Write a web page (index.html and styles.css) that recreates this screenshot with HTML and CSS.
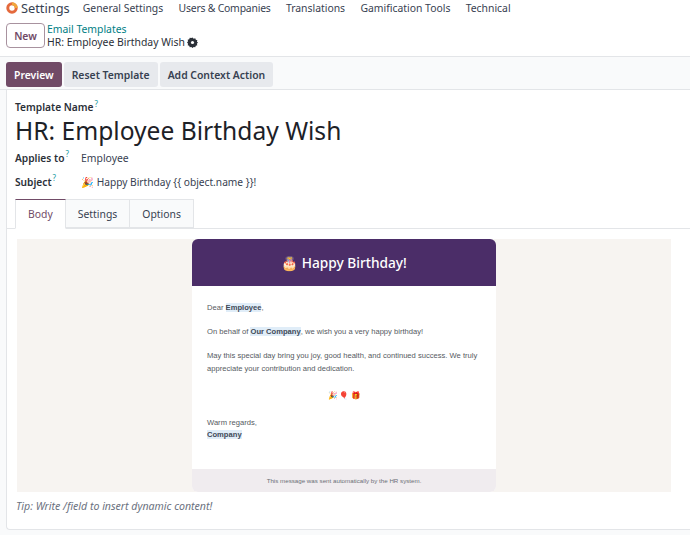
FILE: index.html
```html
<!DOCTYPE html>
<html lang="en">
<head>
    <meta charset="UTF-8">
    <title>Settings - Email Templates</title>
    <link rel="stylesheet" href="styles.css">
</head>
<body>
    <nav class="navbar">
        <svg class="app-logo" width="12" height="12" viewBox="0 0 12 12">
            <circle cx="6" cy="6" r="4.2" fill="none" stroke="#e4693c" stroke-width="3"/>
            <path d="M6 1.8a4.2 4.2 0 0 1 4.2 4.2" fill="none" stroke="#f0a63c" stroke-width="3"/>
        </svg>
        <span class="app-name">Settings</span>
        <a class="nav-item">General Settings</a>
        <a class="nav-item nav-tight">Users &amp; Companies</a>
        <a class="nav-item">Translations</a>
        <a class="nav-item">Gamification Tools</a>
        <a class="nav-item">Technical</a>
    </nav>

    <div class="control-panel">
        <button class="new-button">New</button>
        <div class="breadcrumb">
            <a class="crumb-link">Email Templates</a>
            <div class="crumb-current">
                HR: Employee Birthday Wish
                <svg class="gear" width="11" height="11" viewBox="0 0 12 12">
                    <path d="M6 .6l1.3 1.2 1.7-.5.6 1.7 1.7.6-.5 1.7L12 6l-1.2 1.3.5 1.7-1.7.6-.6 1.7-1.7-.5L6 12l-1.3-1.2-1.7.5-.6-1.7-1.7-.6.5-1.7L0 6l1.2-1.3-.5-1.7 1.7-.6.6-1.7 1.7.5z" fill="#2b3038"/>
                    <circle cx="6" cy="6" r="1.7" fill="#fff"/>
                </svg>
            </div>
        </div>
    </div>

    <div class="action-bar">
        <button class="btn btn-primary">Preview</button>
        <button class="btn">Reset Template</button>
        <button class="btn">Add Context Action</button>
    </div>

    <div class="sheet">
        <label class="field-label">Template Name<sup>?</sup></label>
        <h1 class="title">HR: Employee Birthday Wish</h1>

        <div class="field-row">
            <label class="field-label row-label">Applies to<sup>?</sup></label>
            <span>Employee</span>
        </div>
        <div class="field-row subject-row">
            <label class="field-label row-label">Subject<sup>?</sup></label>
            <span class="subject-value">🎉 Happy Birthday {{ object.name }}!</span>
        </div>

        <div class="tabs">
            <div class="tab active">Body</div>
            <div class="tab">Settings</div>
            <div class="tab">Options</div>
        </div>

        <div class="editor">
            <div class="mail-card">
                <div class="mail-header">🎂 Happy Birthday!</div>
                <div class="mail-body">
                    <p>Dear <b class="dyn">Employee</b>,</p>
                    <p>On behalf of <b class="dyn">Our Company</b>, we wish you a very happy birthday!</p>
                    <p>May this special day bring you joy, good health, and continued success. We truly appreciate your contribution and dedication.</p>
                    <div class="mail-emojis">🎉 🎈 🎁</div>
                    <p class="regards">Warm regards,<br><b class="dyn">Company</b></p>
                </div>
                <div class="mail-footer">This message was sent automatically by the HR system.</div>
            </div>
        </div>

        <div class="tip">Tip: Write /field to insert dynamic content!</div>
    </div>
</body>
</html>
```

FILE: styles.css
```css
:root {
    --primary-color: #714b67;
    --text-color: #374151;
    --border-color: #e3e5e8;
    --link-color: #017e84;
}

html {
    height: 100%;
    overflow: hidden;
}

body {
    margin: 0;
    height: 535px;
    overflow: hidden;
    background: #f9fafb;
    color: var(--text-color);
    font-family: 'Noto Sans', 'Open Sans', sans-serif;
    font-size: 10.4px;
}

button {
    font-family: inherit;
    cursor: pointer;
}

.navbar {
    display: flex;
    align-items: center;
    height: 15px;
    padding-left: 6px;
    background: white;
}

.app-logo {
    margin-right: 3px;
}

.app-name {
    font-size: 12.8px;
    margin-right: 13px;
}

.nav-item {
    margin-right: 15.3px;
}

.nav-tight {
    letter-spacing: -0.2px;
}

.control-panel {
    display: flex;
    align-items: flex-start;
    height: 42px;
    box-sizing: border-box;
    padding: 8px 0 0 6px;
    gap: 2px;
    background: white;
    border-bottom: 1px solid var(--border-color);
}

.new-button {
    width: 39px;
    height: 25px;
    padding: 0;
    border: 1px solid #a8929f;
    border-radius: 4px;
    background: white;
    color: var(--primary-color);
    font-size: 10.4px;
    font-weight: 600;
}

.breadcrumb {
    line-height: 13px;
}

.crumb-link {
    color: var(--link-color);
}

.crumb-current {
    display: flex;
    align-items: center;
    gap: 2px;
    color: #2b3038;
}

.action-bar {
    display: flex;
    gap: 2px;
    height: 33px;
    box-sizing: border-box;
    padding: 5px 0 0 6px;
    border-bottom: 1px solid var(--border-color);
}

.btn {
    height: 25px;
    padding: 0 8px;
    border: none;
    border-radius: 3px;
    background: #e7e9ed;
    color: var(--text-color);
    font-size: 10.4px;
    font-weight: 600;
}

.btn-primary {
    background: var(--primary-color);
    color: white;
}

.sheet {
    height: 440px;
    box-sizing: border-box;
    margin-left: 6px;
    padding-top: 10px;
    background: white;
    border-left: 1px solid var(--border-color);
    border-bottom: 1px solid var(--border-color);
    border-radius: 0 0 0 4px;
}

.field-label {
    display: block;
    margin-left: 8px;
    font-size: 10.2px;
    font-weight: 600;
    color: #2b3038;
    line-height: 15px;
}

.field-label sup {
    margin-left: 1px;
    font-size: 8px;
    font-weight: 400;
    color: #1b9aa0;
    line-height: 0;
}

.title {
    margin: 0 0 0 8px;
    font-size: 24.6px;
    font-weight: 400;
    line-height: 32px;
    color: #1d2127;
}

.field-row {
    display: flex;
    align-items: center;
    height: 16px;
    margin-top: 3px;
}

.subject-row {
    margin-top: 8px;
}

.row-label {
    width: 66px;
}

.subject-value {
    font-size: 10.2px;
}

.tabs {
    display: flex;
    height: 30px;
    box-sizing: border-box;
    margin-top: 9px;
    padding-left: 8px;
    border-bottom: 1px solid var(--border-color);
}

.tab {
    padding: 0 12px;
    line-height: 28px;
    background: #f9fafb;
    border: 1px solid var(--border-color);
    border-left: none;
    height: 29px;
    box-sizing: border-box;
}

.tab.active {
    padding: 0 12px;
    background: white;
    border-left: 1px solid var(--border-color);
    border-top: 1px solid var(--primary-color);
    border-bottom: 1px solid white;
    height: 30px;
    color: var(--primary-color);
}

.editor {
    width: 654px;
    height: 253px;
    margin: 10px 0 0 10px;
    background: #f7f4f1;
}

.mail-card {
    display: flex;
    flex-direction: column;
    width: 304px;
    height: 253px;
    margin-left: 175px;
    background: white;
    border-radius: 6px;
    overflow: hidden;
    font-family: 'Liberation Sans', Arial, sans-serif;
}

.mail-header {
    height: 47px;
    flex-shrink: 0;
    background: #4b2d68;
    color: white;
    font-family: 'Noto Sans', sans-serif;
    font-size: 13.7px;
    font-weight: 500;
    line-height: 47px;
    text-align: center;
}

.mail-body {
    flex: 1;
    padding: 16px 15px 0;
    font-size: 7.6px;
    line-height: 12.5px;
    color: #555a61;
}

.mail-body p {
    margin: 0 0 11.5px;
}

.dyn {
    background: #e0edf8;
    color: #3f4a57;
}

.mail-emojis {
    margin: 15px 0 14px;
    text-align: center;
}

.mail-footer {
    height: 23px;
    flex-shrink: 0;
    background: #f0ecef;
    color: #6b6f76;
    font-size: 6.2px;
    line-height: 23px;
    text-align: center;
}

.tip {
    margin: 7px 0 0 9px;
    font-size: 10.6px;
    font-style: italic;
    color: #6b7280;
    line-height: 15px;
}
```
